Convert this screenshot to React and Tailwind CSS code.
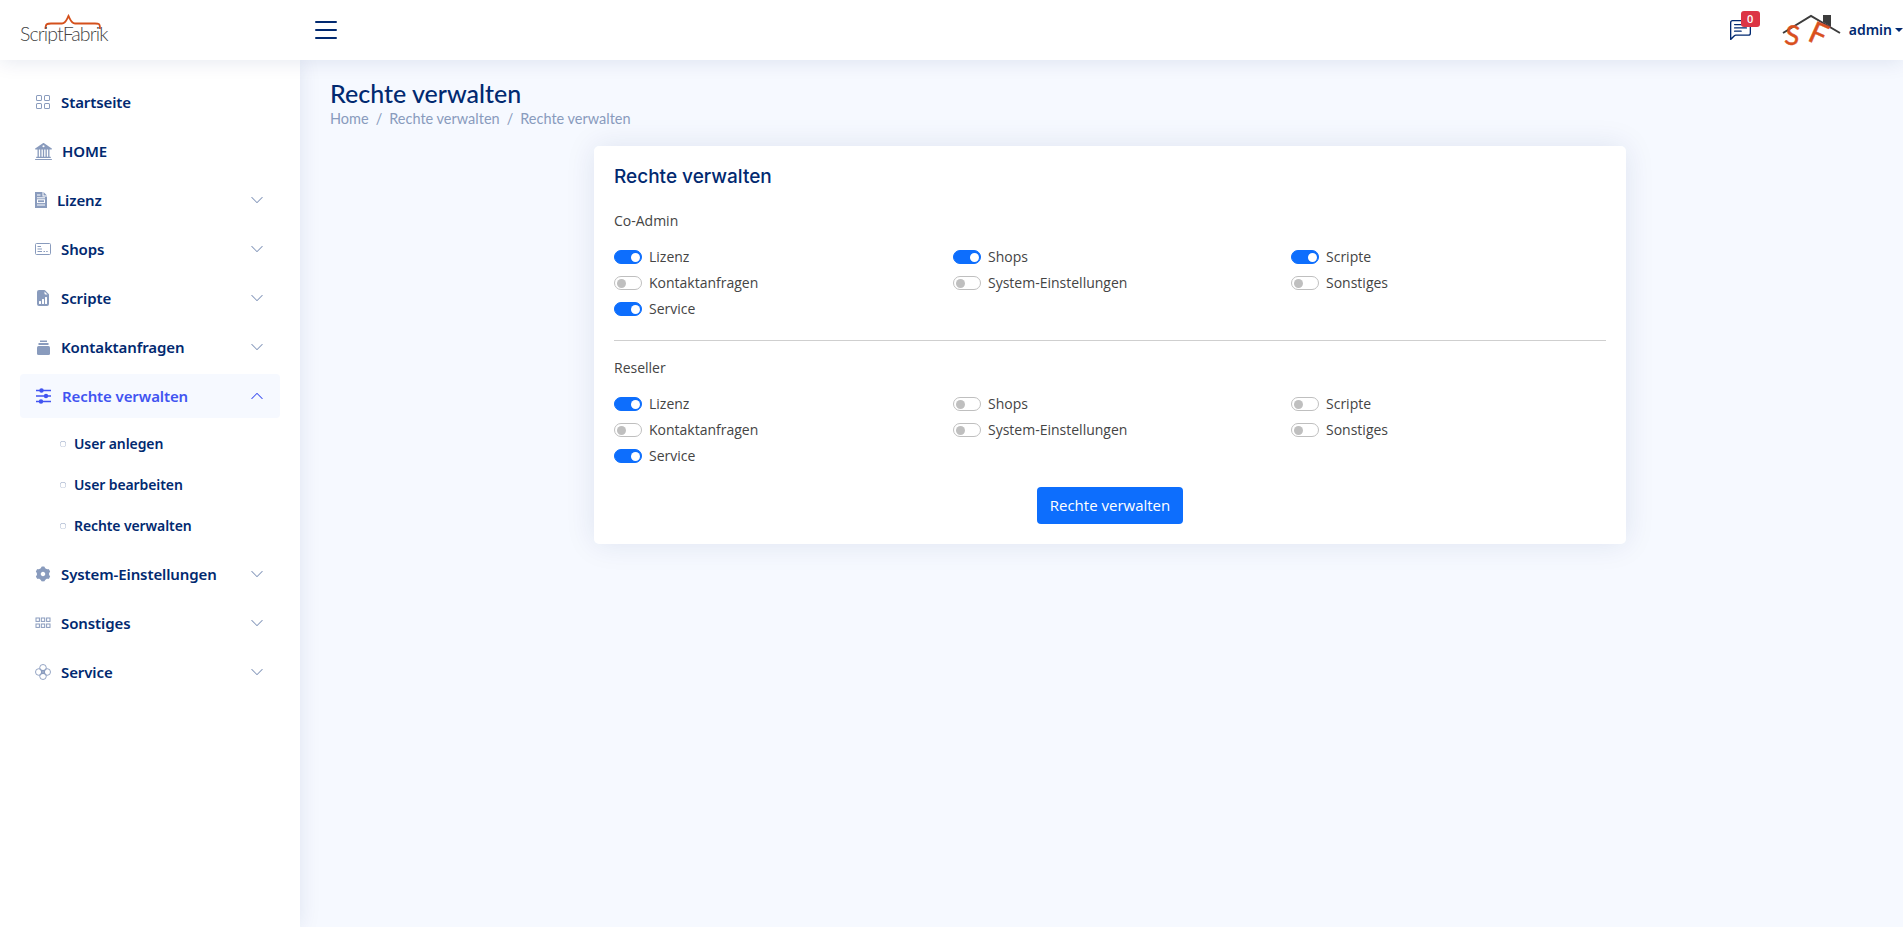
import { BsGrid, BsBank2, BsFileEarmarkBarGraphFill, BsChevronDown, BsChevronUp, BsList, BsChatLeftText, BsCircle } from 'react-icons/bs'
import { RiSettings3Fill } from 'react-icons/ri'

function LicenseIcon({ className }) {
  return (
    <svg viewBox="0 0 12 16" className={className}>
      <path d="M0 0 H7.500 V4.500 H12 V16 H0 Z M8.500 0 L12 3.500 H8.500 Z" fill="currentColor" />
      <path d="M2 3 H5.500 M2 5.800 H10" stroke="#fff" strokeWidth="1" />
      <rect x="2.500" y="7.800" width="7" height="2.800" fill="none" stroke="#fff" strokeWidth="1" />
      <path d="M2 13 H10" stroke="#fff" strokeWidth="1" />
    </svg>
  )
}

function ShopsIcon({ className }) {
  return (
    <svg viewBox="0 0 16 16" fill="none" className={className}>
      <rect x="0.500" y="2.500" width="15" height="11" rx="1" stroke="currentColor" />
      <path d="M2.500 5.500 H6 M2.500 8 H7" stroke="currentColor" strokeWidth="1.200" />
      <path d="M2.500 10.500 H7 M8.500 10.500 H10 M11.200 10.500 H12.700" stroke="currentColor" strokeWidth="1" />
    </svg>
  )
}

function StackIcon({ className }) {
  return (
    <svg viewBox="0 0 13 15" fill="currentColor" className={className}>
      <rect x="3" y="0.500" width="7" height="1.500" />
      <rect x="1.500" y="3" width="10" height="2" />
      <rect x="0" y="6" width="13" height="9" rx="1.500" />
    </svg>
  )
}

function SlidersIcon({ className }) {
  return (
    <svg viewBox="0 0 16 16" fill="currentColor" className={className}>
      <path d="M0.500 2.500 H15.500 M0.500 8 H15.500 M0.500 13.500 H15.500" stroke="currentColor" strokeWidth="1.400" />
      <circle cx="6" cy="2.500" r="2.200" />
      <circle cx="10.500" cy="8" r="2.200" />
      <circle cx="5.500" cy="13.500" r="2.200" />
    </svg>
  )
}

function MoreIcon({ className }) {
  return (
    <svg viewBox="0 0 16 16" fill="none" stroke="currentColor" className={className}>
      <rect x="1" y="3" width="3.400" height="3.400" />
      <rect x="6.300" y="3" width="3.400" height="3.400" />
      <rect x="11.600" y="3" width="3.400" height="3.400" />
      <rect x="1" y="9" width="3.400" height="3.400" />
      <rect x="6.300" y="9" width="3.400" height="3.400" />
      <rect x="11.600" y="9" width="3.400" height="3.400" />
    </svg>
  )
}

function ServiceIcon({ className }) {
  return (
    <svg viewBox="0 0 16 16" fill="none" stroke="currentColor" strokeWidth="0.900" className={className}>
      <circle cx="8" cy="3.800" r="3.300" />
      <circle cx="12.200" cy="8" r="3.300" />
      <circle cx="8" cy="12.200" r="3.300" />
      <circle cx="3.800" cy="8" r="3.300" />
      <circle cx="8" cy="8" r="1.500" strokeWidth="1.400" />
    </svg>
  )
}

const navBefore = [
  { label: 'Startseite', icon: BsGrid, w: 'w-4 h-4 mr-2.5', plain: true },
  { label: 'HOME', icon: BsBank2, w: 'w-[17px] h-[17px] mr-2.5', plain: true },
  { label: 'Lizenz', icon: LicenseIcon, w: 'w-3 h-4 mr-2.5' },
  { label: 'Shops', icon: ShopsIcon, w: 'w-4 h-4 mr-2.5' },
  { label: 'Scripte', icon: BsFileEarmarkBarGraphFill, w: 'w-4 h-4 mr-2.5' },
  { label: 'Kontaktanfragen', icon: StackIcon, w: 'w-[13px] h-[15px] ml-[1.500px] mr-[11.500px]' },
]

const navAfter = [
  { label: 'System-Einstellungen', icon: RiSettings3Fill, w: 'w-[18px] h-[18px] -ml-[1px] mr-[9px]' },
  { label: 'Sonstiges', icon: MoreIcon, w: 'w-4 h-4 mr-2.5' },
  { label: 'Service', icon: ServiceIcon, w: 'w-4 h-4 mr-2.5' },
]

const subItems = ['User anlegen', 'User bearbeiten', 'Rechte verwalten']

const coAdmin = [
  ['Lizenz', true], ['Shops', true], ['Scripte', true],
  ['Kontaktanfragen', false], ['System-Einstellungen', false], ['Sonstiges', false],
  ['Service', true],
]

const reseller = [
  ['Lizenz', true], ['Shops', false], ['Scripte', false],
  ['Kontaktanfragen', false], ['System-Einstellungen', false], ['Sonstiges', false],
  ['Service', true],
]

function NavItem({ item }) {
  const Icon = item.icon
  return (
    <a className="flex items-center h-11 px-[15px] text-[15px] font-semibold tracking-[-0.1px] text-[#012970]">
      <Icon className={`${item.w} shrink-0 text-[#899bbd]`} />
      <span className="flex-1">{item.label}</span>
      {!item.plain && <BsChevronDown className="w-[14px] h-[14px] mr-[1px] text-[#899bbd]" />}
    </a>
  )
}

function Toggle({ label, on }) {
  return (
    <label className="flex items-center h-[26px] text-sm text-[#444444]">
      <span className={`flex items-center w-7 h-[14px] rounded-full border mr-[7px] ${on ? 'justify-end bg-[#0d6efd] border-[#0d6efd]' : 'justify-start bg-white border-[#bfbfbf]'}`}>
        <span className={`w-[9px] h-[9px] mx-[1.500px] rounded-full ${on ? 'bg-white' : 'bg-[#bfbfbf]'}`} />
      </span>
      {label}
    </label>
  )
}

function Group({ title, rows }) {
  return (
    <div>
      <p className="text-sm text-[#444444] leading-[21px] mb-[13px]">{title}</p>
      <div className="grid grid-cols-[339px_338px_1fr]">
        {rows.map(([label, on]) => (
          <Toggle key={label} label={label} on={on} />
        ))}
      </div>
    </div>
  )
}

export default function App() {
  return (
    <div className="h-screen flex flex-col bg-[#f6f9ff] overflow-hidden font-['Open_Sans',sans-serif]">
      <header className="relative z-20 flex items-center h-[60px] shrink-0 bg-white shadow-[0_2px_20px_rgba(1,41,112,0.1)]">
        <div className="w-[310px] pl-5 shrink-0">
          <svg width="90" height="32" viewBox="0 0 90 32" fill="none">
            <path d="M25.500 15 C25.500 9.500 27 9.500 31 9.500 L42 9.500 C45.500 9.500 46.500 6 48.500 2 C50.500 6 51.500 9.500 55 9.500 L75 9.500 C79 9.500 80 9.500 80 15" stroke="#d4501c" strokeWidth="1.800" />
            <text x="0" y="27" fontFamily="Lato" fontWeight="300" fontSize="19.500" letterSpacing="-0.900" fill="#444444">ScriptFabrik</text>
          </svg>
        </div>
        <BsList className="w-8 h-8 text-[#012970]" />
        <div className="ml-auto flex items-center">
          <div className="relative mr-[31px]">
            <BsChatLeftText className="w-[21px] h-[21px] text-[#012970]" />
            <span className="absolute -top-[9px] left-[11px] w-[19px] h-4 rounded-[3px] bg-[#dc3545] text-white text-[11px] leading-4 text-center font-semibold">0</span>
          </div>
          <svg width="60" height="32" viewBox="0 0 60 32" fill="none" className="mr-[7px] overflow-visible">
            <path d="M1 19 L29 2 L58 19" stroke="#3d3d3d" strokeWidth="2" />
            <path d="M41 1 H49 V13 L41 8 Z" fill="#3d3d3d" />
            <text x="3" y="31" fontFamily="Lato" fontSize="27" fill="#d9501e" stroke="#d9501e" strokeWidth="0.500" transform="rotate(8 11 22)">S</text>
            <text x="28" y="31" fontFamily="Lato" fontSize="30" fill="#d9501e" stroke="#d9501e" strokeWidth="0.500" transform="rotate(24 38 20)">F</text>
          </svg>
          <span className="text-sm font-semibold text-[#012970] font-['Noto_Sans',sans-serif]">admin</span>
          <span className="ml-[3px] w-0 h-0 border-x-[4px] border-x-transparent border-t-[4px] border-t-[#012970]" />
        </div>
      </header>

      <div className="flex flex-1 min-h-0">
        <aside className="w-[300px] shrink-0 bg-white p-5 shadow-[0_0_20px_rgba(1,41,112,0.1)] font-['Noto_Sans',sans-serif]">
          <nav className="flex flex-col gap-[5px]">
            {navBefore.map((item) => (
              <NavItem key={item.label} item={item} />
            ))}
            <a className="flex items-center h-11 px-[15px] rounded-[4px] bg-[#f6f9ff] text-[15px] font-semibold tracking-[-0.1px] text-[#4154f1]">
              <SlidersIcon className="w-[17px] h-4 mr-2.5 text-[#4154f1]" />
              <span className="flex-1">Rechte verwalten</span>
              <BsChevronUp className="w-[14px] h-[14px] mr-[1px] text-[#4154f1]" />
            </a>
            <div className="flex flex-col pb-[1px]">
              {subItems.map((label) => (
                <a key={label} className="flex items-center h-[41px] pl-10 text-sm font-semibold tracking-[-0.1px] text-[#012970]">
                  <BsCircle className="w-[6px] h-[6px] mr-2 text-[#899bbd]" />
                  {label}
                </a>
              ))}
            </div>
            {navAfter.map((item) => (
              <NavItem key={item.label} item={item} />
            ))}
          </nav>
        </aside>

        <main className="flex-1 min-w-0 pt-4 pl-[30px] pr-[13px]">
          <h1 className="text-[25px] leading-[34px] font-medium text-[#012970] font-['Lato',sans-serif]">Rechte verwalten</h1>
          <ol className="flex items-center text-[14.500px] leading-[18px] text-[#899bbd] font-['Lato',sans-serif]">
            <li>Home</li>
            <li className="px-[7px]">/</li>
            <li>Rechte verwalten</li>
            <li className="px-[7px]">/</li>
            <li>Rechte verwalten</li>
          </ol>
          <section className="w-[1032px] mx-auto mt-[18px] px-5 pt-5 pb-5 bg-white rounded-[5px] shadow-[0_0_30px_rgba(1,41,112,0.1)]">
            <h5 className="text-[19px] leading-[22px] font-medium text-[#012970] font-['Inter',sans-serif] mb-[22px]">Rechte verwalten</h5>
            <Group title="Co-Admin" rows={coAdmin} />
            <hr className="mt-[18px] mb-4 border-t border-[#cfcfcf]" />
            <Group title="Reseller" rows={reseller} />
            <div className="flex justify-center mt-[18px]">
              <button className="h-[37px] w-[146px] rounded-[4px] bg-[#0d6efd] text-white text-[15px]">Rechte verwalten</button>
            </div>
          </section>
        </main>
      </div>
    </div>
  )
}
